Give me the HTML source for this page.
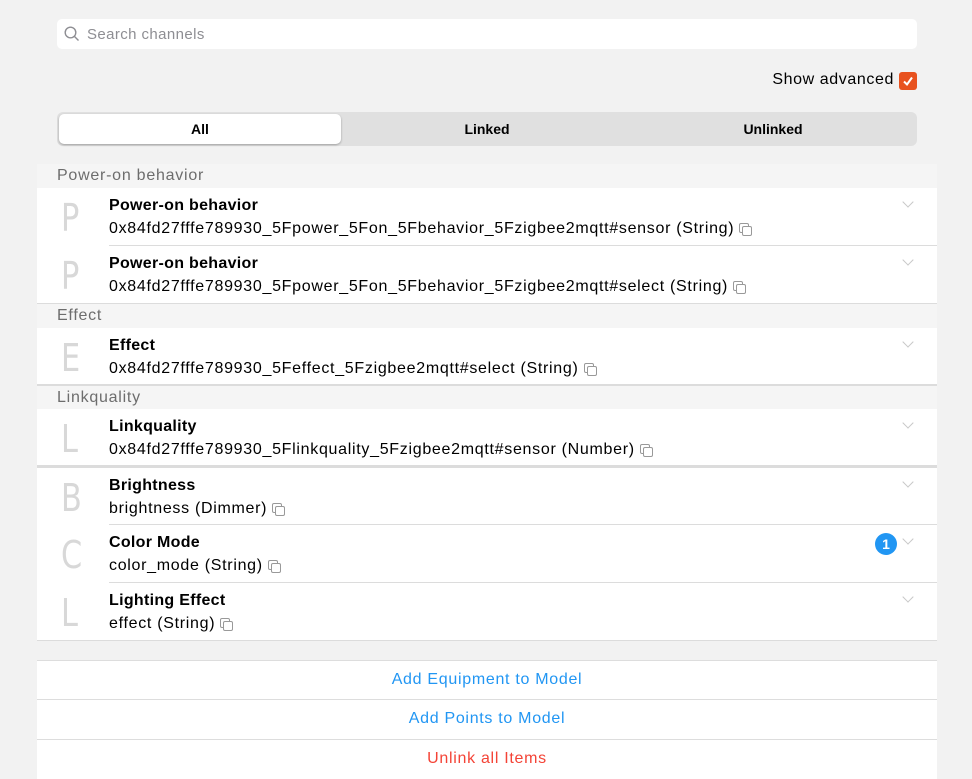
<!DOCTYPE html>
<html><head><meta charset="utf-8"><style>
*{margin:0;padding:0;box-sizing:border-box}
body{width:972px;height:773px;background:#f2f2f2;font-family:"Liberation Sans",Arial,sans-serif;position:relative;overflow:hidden;color:#000}
.abs{position:absolute}
.search{left:57px;top:19px;width:860px;height:30px;background:#fff;border-radius:5px}
.search span{position:absolute;left:30px;top:7px;font-size:15px;color:#8e8e93;letter-spacing:.4px}
.adv{right:78px;top:71px;font-size:16px;letter-spacing:.6px}
.cb{position:absolute;left:899px;top:72px;width:18px;height:18px;background:#e8521f;border-radius:3px}
.seg{left:57px;top:112px;width:860px;height:34px;background:#e0e0e0;border-radius:6px}
.seg .act{position:absolute;left:2px;top:2px;width:282px;height:30px;background:#fff;border-radius:5px;box-shadow:0 1px 2px rgba(0,0,0,.3)}
.seg b{position:absolute;top:9px;font-size:14px;width:286px;text-align:center}
.gh{left:37px;width:900px;height:24px;background:#f5f5f5;font-size:16px;color:#6d6d6d;padding:3px 0 0 20px;letter-spacing:.75px}
.it{left:37px;width:900px;height:58px;background:#fff}
.it .l{position:absolute;left:24px;top:8px;font-size:38px;color:#d8d8d8;font-family:"DejaVu Sans",sans-serif;transform:scaleX(.8);transform-origin:left}
.it .t{position:absolute;left:72px;top:9px;font-size:16px;font-weight:bold;letter-spacing:.3px}
.it .s{position:absolute;left:72px;top:32px;font-size:16px;white-space:nowrap;letter-spacing:.7px}
.it .sep{position:absolute;left:72px;right:0;bottom:0;height:1px;background:#dcdcdc}
.cp{display:inline-block;width:12px;height:12px;position:relative;margin-left:5px;vertical-align:-2px}
.cp:before{content:"";position:absolute;left:0;top:0;width:8px;height:8px;border:1px solid #999;border-radius:2px}
.cp:after{content:"";position:absolute;left:3px;top:3px;width:8px;height:8px;border:1px solid #999;border-radius:2px;background:#fff}
.chev{position:absolute;right:25px;top:10px;width:8px;height:8px;border-right:1.5px solid #c8c8c8;border-bottom:1.5px solid #c8c8c8;transform:rotate(45deg)}
.line{left:37px;width:900px;background:#dcdcdc}
.btn{left:37px;width:900px;height:40px;background:#fff;border-top:1px solid #ddd;text-align:center;font-size:16px;padding-top:10px;color:#2196f3;letter-spacing:.7px}
.badge{position:absolute;left:838px;top:8px;width:22px;height:22px;border-radius:11px;background:#2196f3;color:#fff;font-size:14px;font-weight:bold;text-align:center;line-height:22px}
</style></head><body>
<div class="abs search"><svg class="abs" style="left:7px;top:7px" width="16" height="16" viewBox="0 0 16 16"><circle cx="6.5" cy="6.5" r="5.3" fill="none" stroke="#8e8e93" stroke-width="1.4"/><line x1="10.4" y1="10.4" x2="14.5" y2="14.5" stroke="#8e8e93" stroke-width="1.4"/></svg><span>Search channels</span></div>
<div class="abs adv">Show advanced</div>
<div class="cb"><svg width="18" height="18" viewBox="0 0 18 18"><path d="M5 9.5l3 3 5-7" fill="none" stroke="#fff" stroke-width="2"/></svg></div>
<div class="abs seg"><div class="act"></div><b style="left:0">All</b><b style="left:287px">Linked</b><b style="left:573px">Unlinked</b></div>

<div class="abs gh" style="top:164px">Power-on behavior</div>
<div class="abs it" style="top:188px"><span class="l">P</span><span class="t">Power-on behavior</span><span class="s">0x84fd27fffe789930_5Fpower_5Fon_5Fbehavior_5Fzigbee2mqtt#sensor (String)<i class="cp"></i></span><i class="chev"></i><div class="sep"></div></div>
<div class="abs it" style="top:246px"><span class="l">P</span><span class="t">Power-on behavior</span><span class="s">0x84fd27fffe789930_5Fpower_5Fon_5Fbehavior_5Fzigbee2mqtt#select (String)<i class="cp"></i></span><i class="chev"></i></div>
<div class="abs line" style="top:303px;height:1px"></div>
<div class="abs gh" style="top:304px">Effect</div>
<div class="abs it" style="top:328px;height:56px"><span class="l">E</span><span class="t">Effect</span><span class="s">0x84fd27fffe789930_5Feffect_5Fzigbee2mqtt#select (String)<i class="cp"></i></span><i class="chev"></i></div>
<div class="abs line" style="top:384px;height:2px"></div>
<div class="abs gh" style="top:386px">Linkquality</div>
<div class="abs it" style="top:409px;height:56px"><span class="l">L</span><span class="t">Linkquality</span><span class="s">0x84fd27fffe789930_5Flinkquality_5Fzigbee2mqtt#sensor (Number)<i class="cp"></i></span><i class="chev"></i></div>
<div class="abs line" style="top:465px;height:3px"></div>
<div class="abs it" style="top:468px;height:57px"><span class="l">B</span><span class="t">Brightness</span><span class="s">brightness (Dimmer)<i class="cp"></i></span><i class="chev"></i><div class="sep"></div></div>
<div class="abs it" style="top:525px"><span class="l">C</span><span class="t">Color Mode</span><span class="s">color_mode (String)<i class="cp"></i></span><div class="badge">1</div><i class="chev"></i><div class="sep"></div></div>
<div class="abs it" style="top:583px;height:57px"><span class="l">L</span><span class="t">Lighting Effect</span><span class="s">effect (String)<i class="cp"></i></span><i class="chev"></i></div>
<div class="abs line" style="top:640px;height:1px"></div>

<div class="abs btn" style="top:660px">Add Equipment to Model</div>
<div class="abs btn" style="top:699px">Add Points to Model</div>
<div class="abs btn" style="top:739px;color:#f44336">Unlink all Items</div>
</body></html>
